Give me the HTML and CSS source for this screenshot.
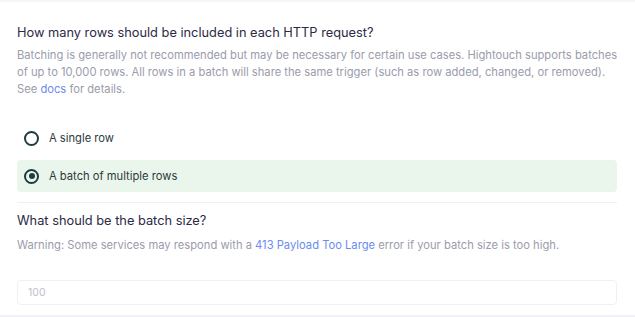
FILE: index.html
```html
<!DOCTYPE html>
<html lang="en">
<head>
    <meta charset="UTF-8">
    <title>Batching</title>
    <link rel="stylesheet" href="styles.css">
</head>
<body>
    <div class="page">
        <div class="section">
            <h2 class="title">How many rows should be included in each HTTP request?</h2>
            <p class="desc">Batching is generally not recommended but may be necessary for certain use cases. Hightouch supports batches of up to 10,000 rows. All rows in a batch will share the same trigger (such as row added, changed, or removed). See <a href="#">docs</a> for details.</p>

            <div class="options">
                <label class="option">
                    <span class="radio"></span>
                    <span>A single row</span>
                </label>
                <label class="option selected">
                    <span class="radio checked"></span>
                    <span>A batch of multiple rows</span>
                </label>
            </div>
        </div>

        <div class="section second">
            <h2 class="title">What should be the batch size?</h2>
            <p class="desc warning">Warning: Some services may respond with a <a href="#">413 Payload Too Large</a> error if your batch size is too high.</p>
            <input class="size" type="text" placeholder="100">
        </div>
    </div>
</body>
</html>
```

FILE: styles.css
```css
body {
    margin: 0;
    font-family: Inter, "Noto Sans", sans-serif;
    background-color: #fff;
}
.page {
    border-top: 2px solid #f5f6fa;
    border-bottom: 2px solid #f1f2f7;
    padding: 0 18px 0 17px;
    height: 317px;
    box-sizing: border-box;
}
.section {
    padding-top: 20px;
}
.second {
    border-top: 1px solid #eef0f3;
    padding-top: 7px;
}
.title {
    margin: 0;
    font-size: 12.8px;
    font-weight: 400;
    color: #2b2a45;
    line-height: 22px;
}
.desc {
    margin: 3px -8px 0 0;
    font-size: 11.2px;
    line-height: 17px;
    color: #9b9cab;
}
.desc.warning {
    margin-top: 5px;
}
.desc a {
    color: #6b8cf0;
    text-decoration: none;
}
.options {
    margin-top: 24px;
    padding-bottom: 4px;
}
.option {
    display: flex;
    align-items: center;
    gap: 10px;
    height: 32px;
    padding: 0 7px;
    margin-bottom: 6px;
    border-radius: 4px;
    font-size: 11.2px;
    color: #2c3a3c;
}
.option.selected {
    background-color: #eaf5ec;
}
.radio {
    width: 11px;
    height: 11px;
    border: 2px solid #1f3d3f;
    border-radius: 50%;
    position: relative;
}
.radio.checked::after {
    content: "";
    position: absolute;
    left: 2.5px;
    top: 2.5px;
    width: 6px;
    height: 6px;
    border-radius: 50%;
    background-color: #1f3d3f;
}
.size {
    display: block;
    width: 100%;
    box-sizing: border-box;
    margin-top: 26px;
    height: 25px;
    padding: 0 10px;
    border: 1px solid #eef0f4;
    border-radius: 4px;
    font-family: Inter, sans-serif;
    font-size: 10.5px;
    color: #333;
}
.size::placeholder {
    color: #bfc0c9;
}
```
